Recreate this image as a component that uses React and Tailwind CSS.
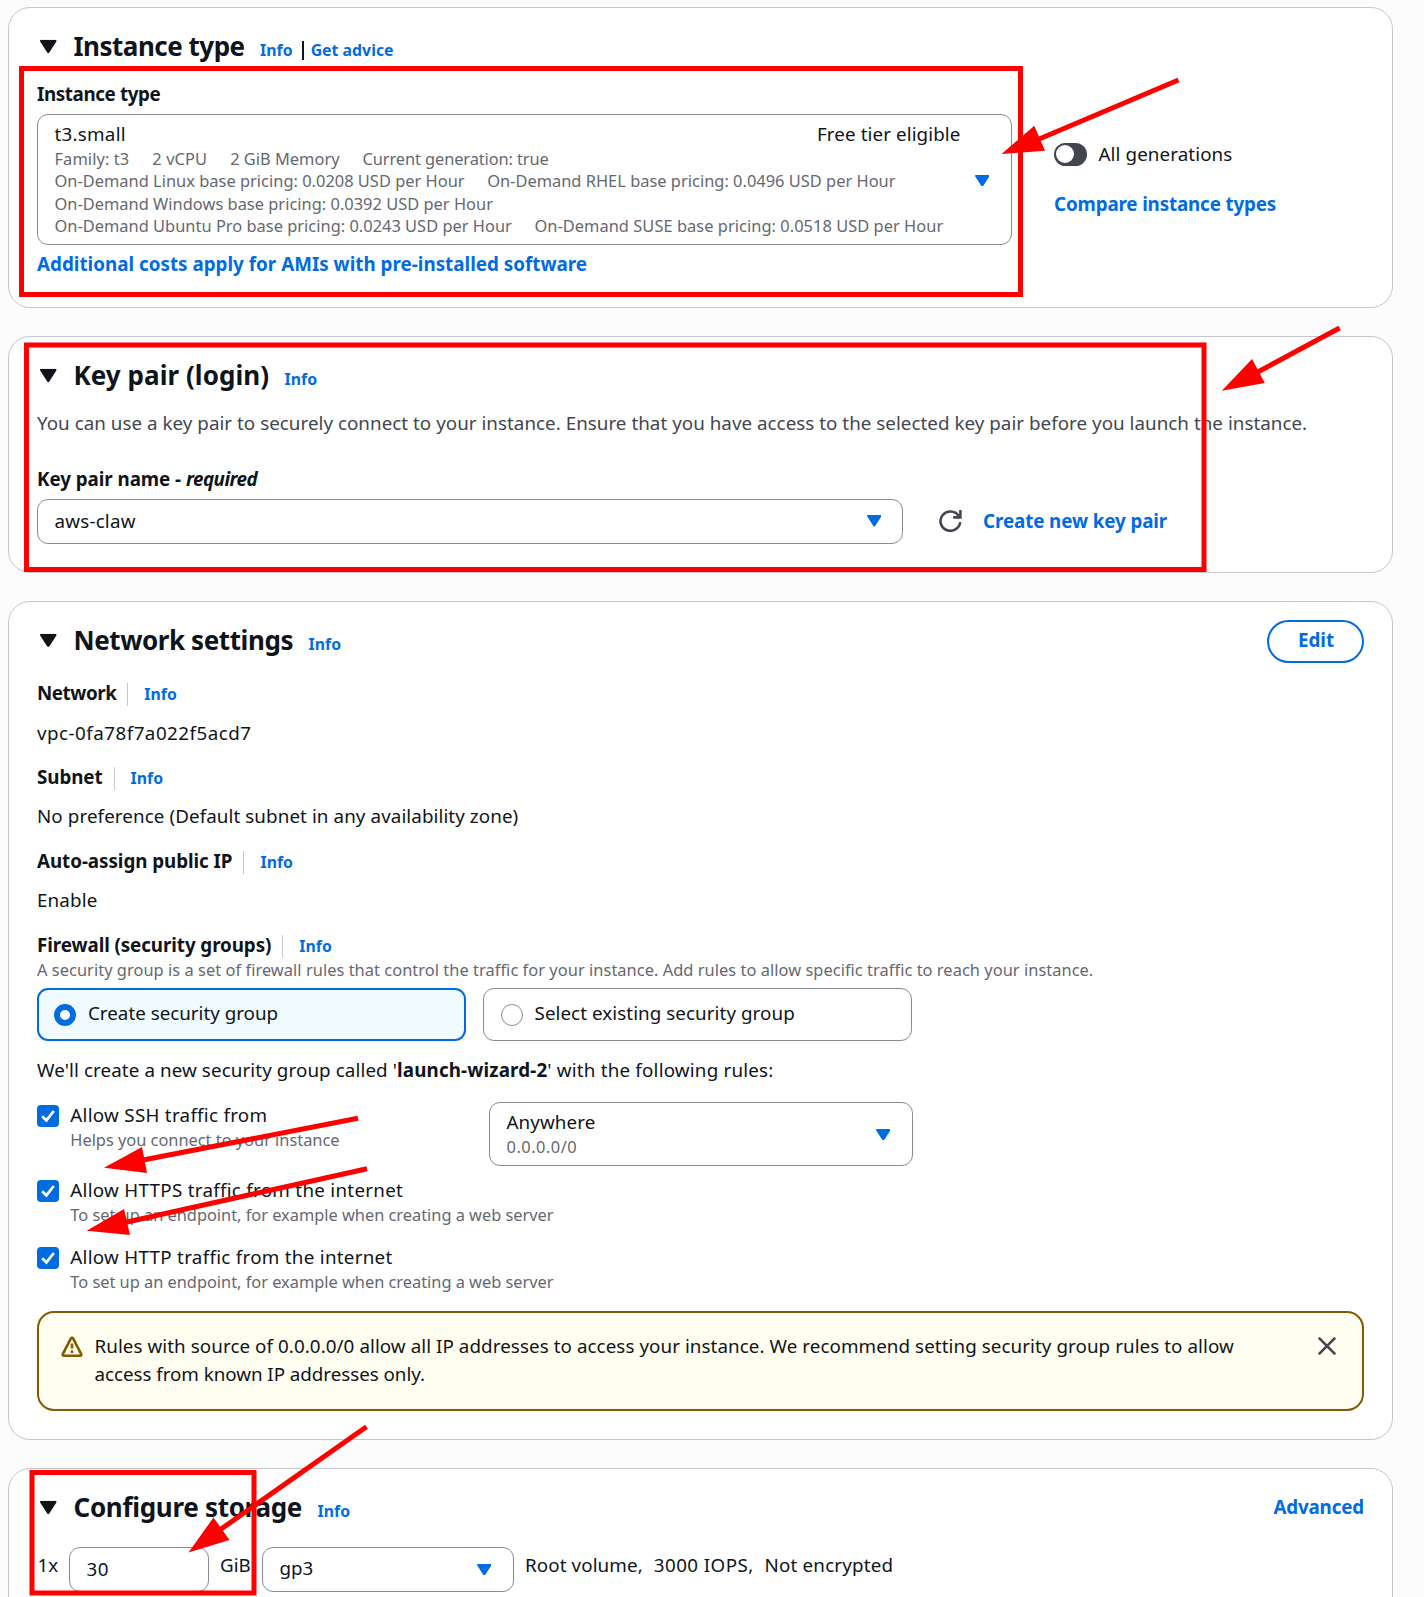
function Caret({ className }) {
  return (
    <svg className={className} viewBox="0 0 16 13" fill="currentColor" preserveAspectRatio="none">
      <path d="M1.2 0h13.6c1 0 1.5 1 .9 1.8L9 12.3c-.5.8-1.5.8-2 0L.3 1.8C-.3 1 .2 0 1.2 0z" />
    </svg>
  );
}

function InfoLink({ children = "Info" }) {
  return (
    <a className="text-[15.8px] leading-[22px] font-bold tracking-[0.03px] text-[#006ce0]">
      {children}
    </a>
  );
}

function SectionHeader({ title, tracking, children }) {
  return (
    <div className="flex h-[34px] items-baseline whitespace-nowrap">
      <Caret className="mr-[17px] ml-[3px] h-[13.5px] w-[16.5px] shrink-0 translate-y-[0.8px] self-center" />
      <h2 className={`mr-[15.5px] text-[26px] leading-[34px] font-bold ${tracking}`}>
        {title}
      </h2>
      {children}
    </div>
  );
}

function Card({ className, children }) {
  return (
    <section
      className={`shrink-0 rounded-[22px] border border-[#c6c6cd] bg-white px-7 ${className}`}
    >
      {children}
    </section>
  );
}

function FieldLabel({ tracking = "tracking-[-0.08px]", children }) {
  return (
    <div className="flex h-7 items-baseline">
      <span className={`leading-7 font-bold ${tracking}`}>{children}</span>
      <span className="mr-4 ml-[11px] h-[23px] w-px translate-y-px self-center bg-[#c6c6cd]" />
      <InfoLink />
    </div>
  );
}

function CheckboxRow({ label, description }) {
  return (
    <div className="flex">
      <span className="mt-1 flex h-[22px] w-[22px] shrink-0 items-center justify-center rounded-[4px] bg-[#006ce0]">
        <svg className="h-[22px] w-[22px]" viewBox="0 0 22 22" fill="none" stroke="white" strokeWidth="2.8">
          <path d="M5.2 11.2 9.4 15.4 16.8 6" />
        </svg>
      </span>
      <div className="ml-[11.3px] whitespace-nowrap">
        <div className="leading-7 tracking-[0.28px]">{label}</div>
        <div className="-mt-[0.5px] text-[16.4px] leading-[22.4px] tracking-[-0.02px] text-[#656871]">
          {description}
        </div>
      </div>
    </div>
  );
}

const arrows = [
  { from: [1178.5, 80], to: [1038, 139.5], head: "1001.5,154 1034.3,125.7 1045,150.7" },
  { from: [1339.6, 328], to: [1256, 373], head: "1221.8,390.7 1252,359 1264.8,383" },
  { from: [358, 1118.3], to: [143, 1160], head: "104,1167.7 142,1147 147,1173" },
  { from: [367, 1168.7], to: [126, 1222.3], head: "86.7,1230.7 124,1209 130,1235" },
  { from: [366.5, 1426.7], to: [219, 1530.5], head: "188.5,1552.5 213.5,1517.5 229.5,1540" },
];

// Red boxes and arrows that sit on top of the form
function Annotations() {
  return (
    <svg
      className="pointer-events-none absolute inset-0"
      width="1424"
      height="1597"
      viewBox="0 0 1424 1597"
      fill="none"
      stroke="#fe0000"
      strokeWidth="5"
    >
      <rect x="21.5" y="68.5" width="999" height="226" />
      <rect x="26.5" y="345" width="1177.5" height="224.5" />
      <rect x="32" y="1472.5" width="222" height="120.5" />
      {arrows.map((arrow) => (
        <g key={arrow.head}>
          <line x1={arrow.from[0]} y1={arrow.from[1]} x2={arrow.to[0]} y2={arrow.to[1]} />
          <polygon points={arrow.head} fill="#fe0000" stroke="none" />
        </g>
      ))}
    </svg>
  );
}

export default function App() {
  return (
    <div className="relative flex h-[1597px] w-[1424px] flex-col gap-7 overflow-hidden bg-[#fcfcfd] pt-[7px] pr-[31px] pl-2 font-['Noto_Sans',sans-serif] text-[18.8px] leading-7 text-[#0f141a]">
      {/* Instance type */}
      <Card className="h-[301px] pt-[21px]">
        <SectionHeader title="Instance type" tracking="tracking-[-0.5px]">
          <InfoLink />
          <span className="mr-[7px] ml-[9px] h-[19px] w-[2px] translate-y-[4px] self-center bg-[#0f141a]" />
          <InfoLink>Get advice</InfoLink>
        </SectionHeader>
        <div className="flex">
          <div className="w-[975px]">
            <div className="mt-[17px] leading-7 font-bold tracking-[-0.38px]">Instance type</div>
            <div className="mt-[6px] flex h-[131px] justify-between rounded-[11px] border border-[#8c8c94] pt-[5px] pr-[22px] pl-[16.5px]">
              <div className="w-[906px] whitespace-nowrap">
                <div className="flex justify-between tracking-[0.1px]">
                  <span className="tracking-[0.25px]">t3.small</span>
                  <span>Free tier eligible</span>
                </div>
                <div className="-mt-[0.1px] text-[16.4px] leading-[22.3px] tracking-[0.02px] text-[#656871]">
                  <div className="flex gap-[23px]">
                    <span className="tracking-[0.1px]">Family: t3</span>
                    <span className="tracking-[0.1px]">2 vCPU</span>
                    <span>2 GiB Memory</span>
                    <span className="tracking-[-0.1px]">Current generation: true</span>
                  </div>
                  <div className="flex gap-[22.5px]">
                    <span>On-Demand Linux base pricing: 0.0208 USD per Hour</span>
                    <span>On-Demand RHEL base pricing: 0.0496 USD per Hour</span>
                  </div>
                  <div>On-Demand Windows base pricing: 0.0392 USD per Hour</div>
                  <div className="flex gap-[22.5px]">
                    <span>On-Demand Ubuntu Pro base pricing: 0.0243 USD per Hour</span>
                    <span className="tracking-[0.05px]">On-Demand SUSE base pricing: 0.0518 USD per Hour</span>
                  </div>
                </div>
              </div>
              <Caret className="mt-[54.5px] h-[11.5px] w-[14.5px] text-[#006ce0]" />
            </div>
            <a className="mt-[5px] block font-bold tracking-[0.02px] text-[#006ce0]">
              Additional costs apply for AMIs with pre-installed software
            </a>
          </div>
          <div className="ml-[42px] pt-[77px]">
            <div className="flex items-center gap-[11.5px]">
              <span className="flex h-[23px] w-[33px] items-center rounded-full bg-[#424650] pl-[2px]">
                <span className="h-[18px] w-[18px] rounded-full bg-white" />
              </span>
              <span className="tracking-[0.1px]">All generations</span>
            </div>
            <a className="mt-[22px] block font-bold tracking-[-0.15px] text-[#006ce0]">
              Compare instance types
            </a>
          </div>
        </div>
      </Card>

      {/* Key pair */}
      <Card className="h-[237px] pt-[21px]">
        <SectionHeader title="Key pair (login)" tracking="tracking-[0.05px]">
          <InfoLink />
        </SectionHeader>
        <p className="mt-[17px] tracking-[0.03px] whitespace-nowrap text-[#424650]">
          You can use a key pair to securely connect to your instance. Ensure that you have access to the selected key pair before you launch the instance.
        </p>
        <div className="mt-7 font-bold tracking-[-0.05px]">
          Key pair name - <i className="tracking-[-0.5px]">required</i>
        </div>
        <div className="mt-[6px] flex items-center">
          <div className="flex h-[45px] w-[866px] items-center justify-between rounded-[11px] border border-[#8c8c94] pr-[21px] pb-[1.5px] pl-[16.5px]">
            <span className="tracking-[0.2px]">aws-claw</span>
            <Caret className="h-[11.5px] w-[14.5px] text-[#006ce0]" />
          </div>
          <svg className="ml-9 h-[22px] w-[23px] -translate-y-px" viewBox="0 0 23 22" fill="none" stroke="#424650" strokeWidth="2.6">
            <path d="M21.2 12.2A9.9 9.6 0 1 1 19.6 5.8l1.2 1.6" />
            <path d="M21.4 0v7.4h-7.2" />
          </svg>
          <a className="mb-[2px] ml-[21px] font-bold tracking-[-0.1px] text-[#006ce0]">Create new key pair</a>
        </div>
      </Card>

      {/* Network settings */}
      <Card className="h-[839px] pt-[18px]">
        <div className="flex h-[43px] items-start justify-between">
          <div className="pt-[2.5px]">
            <SectionHeader title="Network settings" tracking="tracking-[-0.42px]">
              <InfoLink />
            </SectionHeader>
          </div>
          <button className="h-[43px] w-[97px] rounded-full border-2 border-[#006ce0] pb-[3px] pl-[1px] font-bold text-[#006ce0]">
            Edit
          </button>
        </div>
        <div className="mt-4">
          <FieldLabel tracking="tracking-[-0.45px]">Network</FieldLabel>
          <div className="mt-3 tracking-[0.48px]">vpc-0fa78f7a022f5acd7</div>
        </div>
        <div className="mt-4">
          <FieldLabel>Subnet</FieldLabel>
          <div className="mt-[11px] tracking-[0.09px]">No preference (Default subnet in any availability zone)</div>
        </div>
        <div className="mt-[17px]">
          <FieldLabel tracking="tracking-[-0.05px]">Auto-assign public IP</FieldLabel>
          <div className="mt-[11px] tracking-[0.15px]">Enable</div>
        </div>
        <div className="mt-[17px]">
          <FieldLabel>Firewall (security groups)</FieldLabel>
          <div className="text-[16.4px] leading-[22.4px] tracking-[0.045px] text-[#656871]">
            A security group is a set of firewall rules that control the traffic for your instance. Add rules to allow specific traffic to reach your instance.
          </div>
        </div>
        <div className="mt-[7px] flex gap-[17px]">
          <div className="flex h-[53px] w-[429px] items-center gap-3 rounded-[11px] border-2 border-[#006ce0] bg-[#f0fbff] pl-[15px]">
            <span className="h-[22px] w-[22px] rounded-full border-[6px] border-[#006ce0] bg-white" />
            <span className="-mt-[4px]">Create security group</span>
          </div>
          <div className="flex h-[53px] w-[429px] items-center gap-[11.5px] rounded-[11px] border border-[#8c8c94] pl-[17px]">
            <span className="h-[22px] w-[22px] rounded-full border-[1.5px] border-[#8c8c94] bg-white" />
            <span className="-mt-[4px] tracking-[0.07px]">Select existing security group</span>
          </div>
        </div>
        <p className="mt-[15px] tracking-[0.1px]">
          We'll create a new security group called '<b className="tracking-[0.15px]">launch-wizard-2</b>
          <span className="tracking-[0.2px]">' with the following rules:</span>
        </p>
        <div className="mt-[17px] flex h-[66px]">
          <div className="w-[452px]">
            <CheckboxRow label="Allow SSH traffic from" description="Helps you connect to your instance" />
          </div>
          <div className="mt-px flex h-[64px] w-[424px] items-center justify-between rounded-[11px] border border-[#8c8c94] pr-[22px] pl-[16.5px]">
            <div className="pb-[3px]">
              <div className="tracking-[0.1px]">Anywhere</div>
              <div className="text-[16.4px] leading-[22.4px] tracking-[0.5px] text-[#656871]">0.0.0.0/0</div>
            </div>
            <Caret className="h-[11.5px] w-[14.5px] text-[#006ce0]" />
          </div>
        </div>
        <div className="mt-[9px] flex flex-col gap-[17px]">
          <CheckboxRow label="Allow HTTPS traffic from the internet" description="To set up an endpoint, for example when creating a web server" />
          <CheckboxRow label="Allow HTTP traffic from the internet" description="To set up an endpoint, for example when creating a web server" />
        </div>
        <div className="mt-[18px] flex h-[100px] items-start rounded-[17px] border-2 border-[#855900] bg-[#fffef0] pt-[19px] pr-[26px] pl-[22px]">
          <svg className="mt-1 h-[22px] w-[22px] shrink-0" viewBox="0 0 22 22" fill="none" stroke="#855900" strokeWidth="2.6" strokeLinejoin="round">
            <path d="M9.9 2.3 1.8 18.2c-.4.8.1 1.6 1 1.6h16.4c.9 0 1.4-.8 1-1.6L12.1 2.3c-.5-.8-1.7-.8-2.2 0z" />
            <path d="M11 7.5v5M11 14.3v2.7" />
          </svg>
          <p className="ml-[11.5px] w-[1160px] tracking-[0.07px]">
            Rules with source of 0.0.0.0/0 allow all IP addresses to access your instance. We recommend setting security group rules to allow
            <br />
            <span className="tracking-[-0.04px]">access from known IP addresses only.</span>
          </p>
          <svg className="mt-[5px] ml-auto h-[18px] w-[18px]" viewBox="0 0 18 18" stroke="#424650" strokeWidth="2.6">
            <path d="M.8.8 17.2 17.2M17.2.8.8 17.2" />
          </svg>
        </div>
      </Card>

      {/* Configure storage */}
      <Card className="h-[180px] pt-[21px]">
        <div className="flex items-center justify-between">
          <SectionHeader title="Configure storage" tracking="tracking-[-0.3px]">
            <InfoLink />
          </SectionHeader>
          <a className="font-bold tracking-[-0.15px] text-[#006ce0]">Advanced</a>
        </div>
        <div className="mt-[23px] flex h-[45px] items-center whitespace-nowrap">
          <span className="-mt-[10px] w-8 pl-[0.5px]">1x</span>
          <div className="flex h-[45px] w-[140px] items-center rounded-[11px] border border-[#8c8c94] pb-[2px] pl-[16.5px] tracking-[0.5px]">
            30
          </div>
          <span className="-mt-[10px] ml-[11px] w-[42px]">GiB</span>
          <div className="flex h-[45px] w-[252px] items-center justify-between rounded-[11px] border border-[#8c8c94] pr-[22px] pl-[16.5px]">
            <span className="pb-[3px]">gp3</span>
            <Caret className="h-[11.5px] w-[14.5px] text-[#006ce0]" />
          </div>
          <div className="-mt-[10px] ml-[11px] flex gap-[11px]">
            <span className="tracking-[0.1px]">Root volume,</span>
            <span className="tracking-[0.42px]">3000 IOPS,</span>
            <span className="tracking-[0.17px]">Not encrypted</span>
          </div>
        </div>
      </Card>

      <Annotations />
    </div>
  );
}
